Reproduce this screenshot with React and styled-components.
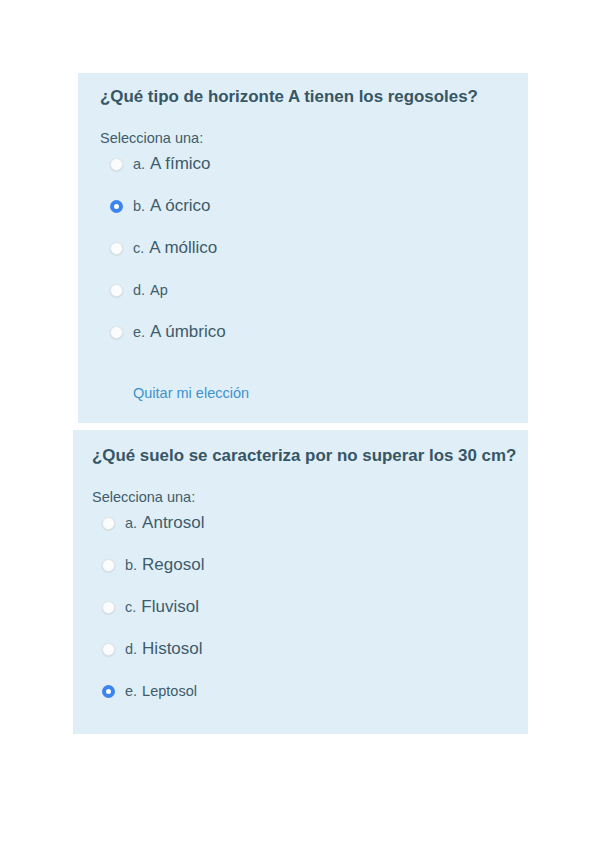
import React from "react";
import styled, { createGlobalStyle } from "styled-components";

const Global = createGlobalStyle`
  body {
    margin: 0;
    background: #ffffff;
    font-family: "Liberation Sans", Arial, sans-serif;
  }
`;

const questions = [
  {
    title: "¿Qué tipo de horizonte A tienen los regosoles?",
    options: [
      ["a.", "A fímico"],
      ["b.", "A ócrico"],
      ["c.", "A móllico"],
      ["d.", "Ap", true],
      ["e.", "A úmbrico"],
    ],
    selected: 1,
    clear: true,
  },
  {
    title: "¿Qué suelo se caracteriza por no superar los 30 cm?",
    options: [
      ["a.", "Antrosol"],
      ["b.", "Regosol"],
      ["c.", "Fluvisol"],
      ["d.", "Histosol"],
      ["e.", "Leptosol", true],
    ],
    selected: 4,
  },
];

export default function App() {
  return (
    <>
      <Global />
      <Page>
        <Card $left={78} $width={450} $height={350} $pad={22} $top={73} $padTop={14}>
          <Question q={questions[0]} />
        </Card>
        <Card $left={73} $width={455} $height={304} $pad={19} $top={7} $padTop={16}>
          <Question q={questions[1]} />
        </Card>
      </Page>
    </>
  );
}

function Question({ q }) {
  return (
    <>
      <Title>{q.title}</Title>
      <Prompt>Selecciona una:</Prompt>
      <Options>
        {q.options.map(([letter, text, small], i) => (
          <Option key={letter}>
            <Radio $checked={i === q.selected} />
            <Letter>{letter}</Letter>
            <Answer $small={small}>{text}</Answer>
          </Option>
        ))}
      </Options>
      {q.clear && <Clear>Quitar mi elección</Clear>}
    </>
  );
}

const Page = styled.div`
  display: flex;
  flex-direction: column;
  padding-bottom: 114px;
`;

const Card = styled.section`
  margin-left: ${(p) => p.$left}px;
  margin-top: ${(p) => p.$top}px;
  width: ${(p) => p.$width}px;
  height: ${(p) => p.$height}px;
  box-sizing: border-box;
  padding: ${(p) => p.$padTop}px 0 0 ${(p) => p.$pad}px;
  background: #e0eff7;
  display: flex;
  flex-direction: column;
  color: #3d5b6b;
`;

const Title = styled.h2`
  margin: 0;
  font-size: 16.9px;
  line-height: 20px;
  font-weight: bold;
  color: #365666;
`;

const Prompt = styled.div`
  margin-top: 22px;
  font-size: 14.5px;
  line-height: 18px;
  color: #3f5c6b;
`;

const Options = styled.div`
  display: flex;
  flex-direction: column;
  margin-top: 4px;
`;

const Option = styled.div`
  display: flex;
  align-items: center;
  height: 42px;
  margin-top: -8px;
  margin-bottom: 8px;
  padding-left: 10px;
`;

const Radio = styled.span`
  width: 13px;
  height: 13px;
  border-radius: 50%;
  box-sizing: border-box;
  flex: none;
  background: ${(p) => (p.$checked ? "#ffffff" : "#fbfcfd")};
  border: ${(p) => (p.$checked ? "4px solid #3c84f0" : "1px solid #e1e6e9")};
  box-shadow: ${(p) => (p.$checked ? "none" : "0 0.5px 1.5px rgba(0,0,0,0.15)")};
`;

const Letter = styled.span`
  margin-left: 10px;
  font-size: 14.5px;
  color: #45616f;
`;

const Answer = styled.span`
  margin-left: 5px;
  font-size: ${(p) => (p.$small ? "14.5px" : "17px")};
  color: #3d5b6b;
`;

const Clear = styled.div`
  margin-top: 24px;
  padding-left: 33px;
  font-size: 14.5px;
  color: #3d93cc;
`;
